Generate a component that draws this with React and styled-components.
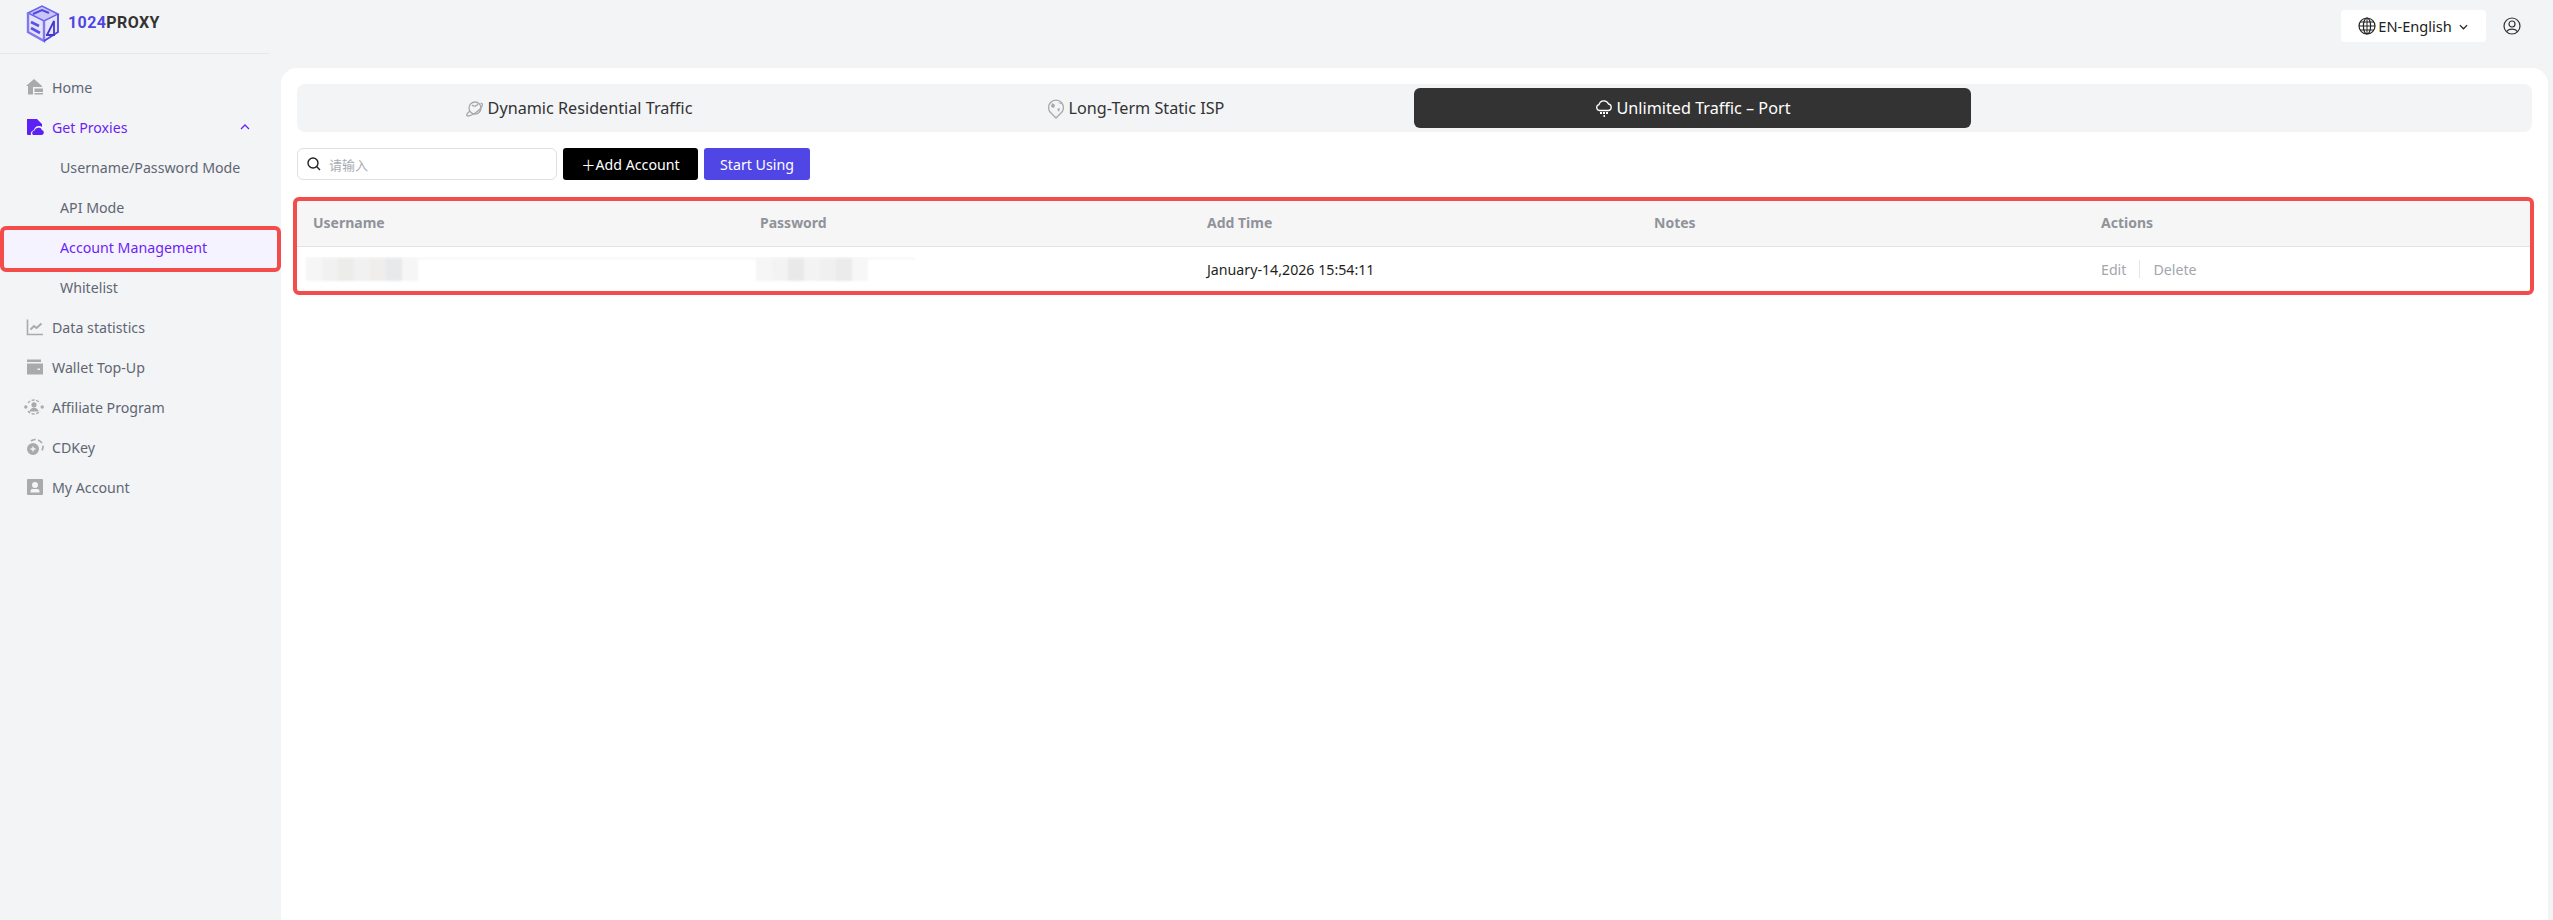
import React from "react";
import styled, { createGlobalStyle } from "styled-components";

const Global = createGlobalStyle`
  html, body { margin: 0; padding: 0; background: #f3f4f6; }
  * { box-sizing: border-box; }
  body { font-family: "Noto Sans", "Noto Sans CJK SC", sans-serif; height: 920px; overflow: hidden; }
`;

const Page = styled.div`
  display: flex;
  width: 2553px;
  height: 920px;
  background: #f3f4f6;
`;
const Sidebar = styled.aside`
  width: 281px;
  flex: none;
  display: flex;
  flex-direction: column;
`;
const LogoBar = styled.div`
  height: 54px;
  width: 269px;
  display: flex;
  align-items: center;
  gap: 7px;
  padding: 0 0 8px 25px;
  border-bottom: 1px solid #e5e7eb;
`;
const LogoText = styled.span`
  font: 700 16px Roboto, sans-serif;
  letter-spacing: 0.4px;
  color: #333;
  b { color: #4f46e5; font-weight: 700; }
`;
const Nav = styled.nav`
  padding-top: 13px;
  display: flex;
  flex-direction: column;
`;
const NavItem = styled.div`
  position: relative;
  height: 40px;
  display: flex;
  align-items: center;
  gap: 8px;
  padding-left: ${p => (p.$sub ? "60px" : "26px")};
  padding-right: 26px;
  font-size: 14.2px;
  color: ${p => (p.$active ? "#6d1ff5" : "#5f6673")};
  background: ${p => (p.$current ? "#f5f3ff" : "transparent")};
  svg.nav { flex: none; width: 18px; height: 18px; color: ${p => (p.$active ? "#5b21f5" : "#a9aaac")}; }
  svg.chev { margin-left: auto; margin-right: 4px; color: #6d1ff5; }
`;
const Callout = styled.span`
  position: absolute;
  inset: ${p => p.$inset};
  border: 4px solid #f44b4b;
  border-radius: 6px;
  pointer-events: none;
`;
const Body = styled.div`
  flex: 1;
  min-width: 0;
  display: flex;
  flex-direction: column;
`;
const Topbar = styled.header`
  height: 68px;
  display: flex;
  justify-content: flex-end;
  align-items: flex-start;
  padding: 10px 32px 0 0;
  gap: 17px;
`;
const LangButton = styled.div`
  width: 145px;
  height: 32px;
  display: flex;
  align-items: center;
  justify-content: center;
  gap: 2px;
  background: #fff;
  border-radius: 4px;
  font-size: 14.6px;
  color: #222;
  svg.chev { color: #222; }
`;
const UserWrap = styled.div`
  height: 32px;
  display: flex;
  align-items: center;
  color: #333;
`;
const Card = styled.main`
  flex: 1;
  width: 2267px;
  background: #fff;
  border-radius: 16px 16px 0 0;
  padding: 16px 16px 0;
`;
const Tabs = styled.div`
  width: 2235px;
  height: 48px;
  background: #f3f4f6;
  border-radius: 8px;
  padding: 4px 0 4px 3px;
  display: grid;
  grid-template-columns: repeat(3, 557px);
`;
const Tab = styled.div`
  display: flex;
  align-items: center;
  justify-content: center;
  gap: 4px;
  border-radius: 6px;
  font-size: 16.2px;
  color: ${p => (p.$active ? "#fff" : "#333")};
  background: ${p => (p.$active ? "#333" : "transparent")};
  svg { color: ${p => (p.$active ? "#fff" : "#a8a8a8")}; }
`;
const Toolbar = styled.div`
  display: flex;
  gap: 6px;
  margin-top: 16px;
  height: 32px;
`;
const Search = styled.div`
  width: 260px;
  display: flex;
  align-items: center;
  gap: 8px;
  padding: 0 9px;
  border: 1px solid #dcdfe6;
  border-radius: 6px;
  font-size: 13px;
  color: #a8abb2;
  svg { color: #222; flex: none; }
`;
const Button = styled.div`
  height: 32px;
  width: ${p => p.$w}px;
  display: flex;
  align-items: center;
  justify-content: center;
  border-radius: 3px;
  font-size: 14.2px;
  color: #fff;
  background: ${p => p.$bg};
`;
const TableWrap = styled.div`
  position: relative;
  margin-top: 21px;
  width: 2233px;
`;
const Row = styled.div`
  display: grid;
  grid-template-columns: repeat(5, 447px);
  height: ${p => p.$h}px;
  align-items: center;
  padding-bottom: ${p => (p.$line ? "2px" : "0")};
  background: ${p => p.$bg || "transparent"};
  border-bottom: ${p => (p.$line ? "1px solid #e2e3e5" : "none")};
`;
const Head = styled.div`
  padding-left: 16px;
  font-size: 14px;
  font-weight: 700;
  color: #909399;
`;
const Cell = styled.div`
  position: relative;
  padding-left: 16px;
  font-size: 14.2px;
  color: #1f1f1f;
  height: 100%;
  display: flex;
  align-items: center;
`;
const Redacted = styled.div`
  display: flex;
  margin-left: ${p => p.$ml}px;
  height: 23px;
  filter: blur(1.2px);
`;
const RedactedBlock = styled.span`
  width: 16px;
  height: 100%;
  background: ${p => p.$c};
`;
const Strip = styled.span`
  position: absolute;
  top: 10px;
  left: ${p => p.$l}px;
  width: ${p => p.$w}px;
  height: 3px;
  background: #fafafa;
`;
const Actions = styled.div`
  display: flex;
  align-items: center;
  font-size: 14.2px;
  color: #a3a6ad;
  gap: 13px;
`;
const Sep = styled.span`
  width: 1px;
  height: 18px;
  background: #e4e5e7;
`;

const Logo = () => (
  <svg width="36" height="42" viewBox="0 0 36 42" fill="none">
    <path d="M2 11 L17 3 L34 12 L34 30 L19 39 L2 30 Z" fill="#e6e4fb" />
    <path d="M3 11 L17 4 L33 12 L19 19 Z" fill="#c9c6f7" stroke="#6a63ea" strokeWidth="1.5" />
    <path d="M8 12 L17 8 L24 11" stroke="#4f46e5" strokeWidth="2" />
    <path d="M3 11 V30 L19 39 V19" stroke="#8079ee" strokeWidth="2.4" />
    <path d="M6 20 L14 24 M6 26 L15 31" stroke="#5a52e8" strokeWidth="2.6" />
    <path d="M33 12 V30 L19 39" stroke="#4f46e5" strokeWidth="1.8" />
    <path d="M22 33 L29 19 V33 H21" stroke="#4338ca" strokeWidth="1.8" />
  </svg>
);
const HomeIcon = () => (
  <svg className="nav" viewBox="0 0 18 18" fill="currentColor">
    <path d="M8 1 L0 8 H2 V16.5 H7 V9 H16 L16 8 Z" />
    <path d="M8.5 10.5 H17 V14 H8.5 Z M8.5 15 H17 V16.5 H8.5 Z" />
  </svg>
);
const ProxyIcon = () => (
  <svg className="nav" viewBox="0 0 18 18" fill="currentColor">
    <path d="M1 1 H11 L16 6 V9 A5 5 0 0 0 8 12 A4 4 0 0 0 5 17 H2 A1 1 0 0 1 1 16 Z" />
    <path d="M7 17 A2.6 2.6 0 0 1 8.5 12.5 A4 4 0 0 1 16 12 A2.6 2.6 0 0 1 16 17 Z" />
  </svg>
);
const ChartIcon = () => (
  <svg className="nav" viewBox="0 0 18 18" fill="none" stroke="currentColor" strokeWidth="1.6">
    <path d="M1.5 1.5 V16.5 H17" />
    <path d="M4.5 11.5 L8 8 L10.5 10 L15.5 5.5" strokeWidth="2" />
  </svg>
);
const WalletIcon = () => (
  <svg className="nav" viewBox="0 0 18 18" fill="currentColor">
    <path d="M1 1.5 H15 V4 H1 Z" />
    <path d="M1 5.5 H17 V16.5 H1 Z M11.5 10.5 V12 H14 V10.5 Z" fillRule="evenodd" />
  </svg>
);
const AffiliateIcon = () => (
  <svg className="nav" viewBox="0 0 20 18" fill="currentColor" style={{ width: 20, marginLeft: -2 }}>
    <circle cx="10" cy="6.8" r="2.6" />
    <path d="M5.4 13.6 A4.6 3.8 0 0 1 14.6 13.6 Z" />
    <circle cx="1.8" cy="9" r="1.7" />
    <circle cx="18.2" cy="9" r="1.7" />
    <path d="M4 5 A7.5 7.5 0 0 1 16 5 M4 13 A7.5 7.5 0 0 0 16 13" fill="none" stroke="currentColor" strokeWidth="1.4" strokeDasharray="3 1.5" />
  </svg>
);
const KeyIcon = () => (
  <svg className="nav" viewBox="0 0 18 18" fill="currentColor">
    <path d="M7 5 A6 6 0 1 1 7 17 A6 6 0 1 1 7 5 Z M6.3 8.5 V10.3 H4.5 V11.7 H6.3 V13.5 H7.7 V11.7 H9.5 V10.3 H7.7 V8.5 Z" fillRule="evenodd" />
    <path d="M5 3 A7 7 0 0 1 9 1.5 A7.5 7.5 0 0 1 17 9 A7 7 0 0 1 15.5 13" fill="none" stroke="currentColor" strokeWidth="1.7" strokeDasharray="5 2.5" />
  </svg>
);
const AccountIcon = () => (
  <svg className="nav" viewBox="0 0 18 18" fill="currentColor">
    <path d="M2 1 H16 A1 1 0 0 1 17 2 V16 A1 1 0 0 1 16 17 H2 A1 1 0 0 1 1 16 V2 A1 1 0 0 1 2 1 Z M9 4 A3 3 0 1 0 9 10 A3 3 0 1 0 9 4 Z M4.5 14.5 H13.5 V13 A2 2 0 0 0 11.5 11 H6.5 A2 2 0 0 0 4.5 13 Z" fillRule="evenodd" />
  </svg>
);
const Chevron = ({ up, size = 12 }) => (
  <svg className="chev" width={size} height={size} viewBox="0 0 12 12" fill="none" stroke="currentColor" strokeWidth="1.3">
    <path d={up ? "M2 8 L6 4 L10 8" : "M2 4.5 L6 8.5 L10 4.5"} />
  </svg>
);
const PlanetIcon = () => (
  <svg width="19" height="19" viewBox="0 0 19 19" fill="none" stroke="currentColor" strokeWidth="1.3">
    <circle cx="10" cy="9" r="6" />
    <path d="M5 12 C1 15 1 17 3 17 C6 17 13 13 16 9 C18 6 18 4 15.5 4.5" />
    <path d="M7 6 C9 8 12 7 13 5" />
  </svg>
);
const PinGlobeIcon = () => (
  <svg width="18" height="21" viewBox="0 0 18 21" fill="none" stroke="currentColor" strokeWidth="1.4">
    <path d="M9 20 L5 16 A7.5 7.5 0 1 1 13 16 Z" />
    <path d="M5 5 L8 7 L7 10 L4 9 Z M11 4 L13 6 L15 6 M10 11 L13 10 L12 14 Z" fill="currentColor" stroke="none" />
  </svg>
);
const CloudIcon = () => (
  <svg width="18" height="20" viewBox="0 0 18 20" fill="none" stroke="currentColor" strokeWidth="1.3">
    <path d="M4.5 12.5 A3 3 0 0 1 4 6.6 A5 5 0 0 1 13.5 6 A3.3 3.3 0 0 1 13.5 12.5 Z" />
    <path d="M5 15 H7 M8 15 H10 M11 15 H13 M8.5 18 H10" strokeWidth="1.8" />
  </svg>
);
const SearchIcon = () => (
  <svg width="14" height="14" viewBox="0 0 14 14" fill="none" stroke="currentColor" strokeWidth="1.4">
    <circle cx="6" cy="6" r="5" />
    <path d="M9.6 9.6 L13 13" />
  </svg>
);
const GlobeIcon = () => (
  <svg width="18" height="18" viewBox="0 0 18 18" fill="none" stroke="currentColor" strokeWidth="1.2">
    <circle cx="9" cy="9" r="8" />
    <ellipse cx="9" cy="9" rx="3.6" ry="8" />
    <path d="M1 9 H17 M9 1 V17 M2 5 H16 M2 13 H16" strokeWidth="1" />
  </svg>
);
const UserIcon = () => (
  <svg width="18" height="18" viewBox="0 0 18 18" fill="none" stroke="currentColor" strokeWidth="1.2">
    <circle cx="9" cy="9" r="8" />
    <circle cx="9" cy="7" r="3" />
    <path d="M3.5 14.8 A6 4.5 0 0 1 14.5 14.8" />
  </svg>
);

const topNav = [
  { label: "Data statistics", icon: <ChartIcon /> },
  { label: "Wallet Top-Up", icon: <WalletIcon /> },
  { label: "Affiliate Program", icon: <AffiliateIcon /> },
  { label: "CDKey", icon: <KeyIcon /> },
  { label: "My Account", icon: <AccountIcon /> },
];
const heads = ["Username", "Password", "Add Time", "Notes", "Actions"];
const blurA = ["#f6f6f6", "#f1f1f1", "#ececeb", "#f1f1f1", "#efeeed", "#e8e9eb", "#f6f6f6"];
const blurB = ["#f6f6f6", "#f3f3f3", "#e9e9e9", "#f3f3f3", "#f0f0f0", "#ebebeb", "#f7f7f7"];

export default function App() {
  return (
    <Page>
      <Global />
      <Sidebar>
        <LogoBar>
          <Logo />
          <LogoText><b>1024</b>PROXY</LogoText>
        </LogoBar>
        <Nav>
          <NavItem><HomeIcon />Home</NavItem>
          <NavItem $active><ProxyIcon />Get Proxies<Chevron up /></NavItem>
          <NavItem $sub>Username/Password Mode</NavItem>
          <NavItem $sub>API Mode</NavItem>
          <NavItem $sub $active $current>
            Account Management
            <Callout $inset="-1px 0 -5px 0" />
          </NavItem>
          <NavItem $sub>Whitelist</NavItem>
          {topNav.map(n => (
            <NavItem key={n.label}>{n.icon}{n.label}</NavItem>
          ))}
        </Nav>
      </Sidebar>
      <Body>
        <Topbar>
          <LangButton><GlobeIcon />EN-English&nbsp;<Chevron size={11} /></LangButton>
          <UserWrap><UserIcon /></UserWrap>
        </Topbar>
        <Card>
          <Tabs>
            <Tab><PlanetIcon />Dynamic Residential Traffic</Tab>
            <Tab><PinGlobeIcon />Long-Term Static ISP</Tab>
            <Tab $active><CloudIcon />Unlimited Traffic – Port</Tab>
          </Tabs>
          <Toolbar>
            <Search><SearchIcon />请输入</Search>
            <Button $w={135} $bg="#000">＋Add Account</Button>
            <Button $w={106} $bg="#4f46e5">Start Using</Button>
          </Toolbar>
          <TableWrap>
            <Row $h={46} $bg="#f6f6f7" $line>
              {heads.map(h => <Head key={h}>{h}</Head>)}
            </Row>
            <Row $h={44}>
              <Cell>
                <Strip $l={9} $w={609} />
                <Redacted $ml={-7}>{blurA.map((c, i) => <RedactedBlock key={i} $c={c} />)}</Redacted>
              </Cell>
              <Cell><Redacted $ml={-4}>{blurB.map((c, i) => <RedactedBlock key={i} $c={c} />)}</Redacted></Cell>
              <Cell>January-14,2026 15:54:11</Cell>
              <Cell />
              <Cell>
                <Actions>Edit<Sep />Delete</Actions>
              </Cell>
            </Row>
            <Callout $inset="-4px -4px -4px -4px" />
          </TableWrap>
        </Card>
      </Body>
    </Page>
  );
}
